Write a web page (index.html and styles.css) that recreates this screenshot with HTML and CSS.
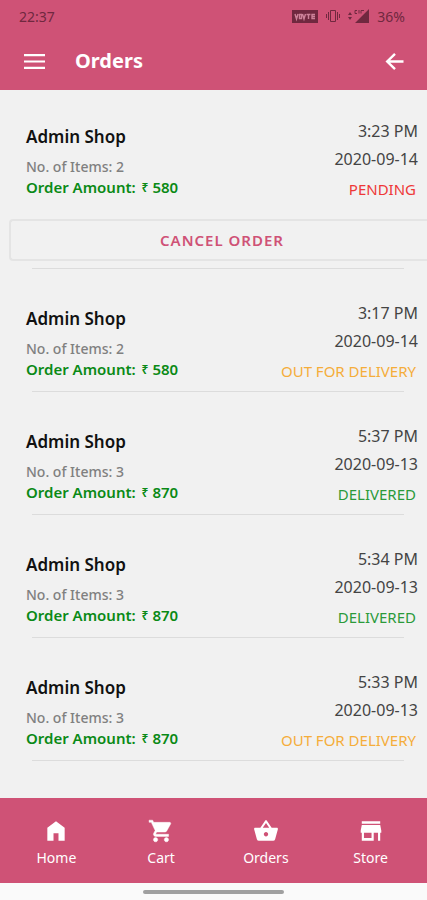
FILE: index.html
```html
<!DOCTYPE html>
<html lang="en">
<head>
<meta charset="utf-8">
<meta name="viewport" content="width=device-width, initial-scale=1">
<title>Orders</title>
<link rel="stylesheet" href="styles.css">
</head>
<body>
<header class="top">
  <div class="status-bar">
    <span>22:37</span>
    <span class="status-icons">
      <svg width="26" height="13" viewBox="0 0 26 13" aria-hidden="true"><path fill="currentColor" d="M0 0h26v13H0z"/><path fill="none" stroke="#cd8299" stroke-width="1.400" d="M3 4l1.500 5L6 4M7.500 4.500h2v4h-2zM10.500 4l1.500 5 1.500-5M14.500 4.500h4M16.500 4.500V9M23 4.500h-3v4h3M20 6.500h3"/></svg>
      <svg width="14" height="14" viewBox="0 0 14 14" aria-hidden="true"><path fill="none" stroke="currentColor" d="M4.500 1.500h5v11h-5zM2.500 3v8M11.500 3v8M.5 5v4M13.500 5v4"/></svg>
      <svg width="21" height="14" viewBox="0 0 21 14" aria-hidden="true"><path fill="currentColor" d="M0 6l2-3 2 3zM0 8l2 3 2-3zM21 0v14H7z"/><path fill="none" stroke="currentColor" stroke-width="1" d="M7 1.500h2M7 1.500v3h2M11 1v3.500M13 4.500v-3h3"/></svg>
      <span>36%</span>
    </span>
  </div>
  <div class="app-bar">
    <button class="icon-button" type="button" aria-label="Open menu"><svg width="24" height="24" viewBox="0 0 24 24"><path fill="currentColor" d="M2 5h21v2.200H2zM2 11.400h21v2.200H2zM2 17.800h21V20H2z"/></svg></button>
    <h1>Orders</h1>
    <button class="icon-button" type="button" aria-label="Back"><svg width="24" height="24" viewBox="0 0 24 24"><path fill="none" stroke="currentColor" stroke-width="2.400" d="M20.500 12.500H4.500M12 4.800L4.200 12.500l7.800 7.700"/></svg></button>
  </div>
</header>

<main class="orders">
  <article class="order">
    <div class="order-row">
      <div class="summary"><h2>Admin Shop</h2><p class="items">No. of Items: 2</p><p class="amount">Order Amount: <span class="rupee">₹</span> 580</p></div>
      <div class="details"><time>3:23 PM</time><time>2020-09-14</time><p class="state pending">PENDING</p></div>
    </div>
    <button class="cancel" type="button">CANCEL ORDER</button>
  </article>
  <article class="order">
    <div class="order-row">
      <div class="summary"><h2>Admin Shop</h2><p class="items">No. of Items: 2</p><p class="amount">Order Amount: <span class="rupee">₹</span> 580</p></div>
      <div class="details"><time>3:17 PM</time><time>2020-09-14</time><p class="state shipping">OUT FOR DELIVERY</p></div>
    </div>
  </article>
  <article class="order">
    <div class="order-row">
      <div class="summary"><h2>Admin Shop</h2><p class="items">No. of Items: 3</p><p class="amount">Order Amount: <span class="rupee">₹</span> 870</p></div>
      <div class="details"><time>5:37 PM</time><time>2020-09-13</time><p class="state delivered">DELIVERED</p></div>
    </div>
  </article>
  <article class="order">
    <div class="order-row">
      <div class="summary"><h2>Admin Shop</h2><p class="items">No. of Items: 3</p><p class="amount">Order Amount: <span class="rupee">₹</span> 870</p></div>
      <div class="details"><time>5:34 PM</time><time>2020-09-13</time><p class="state delivered">DELIVERED</p></div>
    </div>
  </article>
  <article class="order">
    <div class="order-row">
      <div class="summary"><h2>Admin Shop</h2><p class="items">No. of Items: 3</p><p class="amount">Order Amount: <span class="rupee">₹</span> 870</p></div>
      <div class="details"><time>5:33 PM</time><time>2020-09-13</time><p class="state shipping">OUT FOR DELIVERY</p></div>
    </div>
  </article>
</main>

<nav class="tabs">
  <a href="#home"><svg width="26" height="26" viewBox="0 0 24 24" aria-hidden="true"><path fill="currentColor" d="M12 3l8 6v12h-5.700v-7H9.700v7H4V9z"/></svg>Home</a>
  <a href="#cart"><svg width="26" height="26" viewBox="0 0 24 24" aria-hidden="true"><path fill="currentColor" stroke="currentColor" stroke-width=".4" d="M7 18c-1.100 0-1.990.9-1.990 2S5.900 22 7 22s2-.9 2-2-.9-2-2-2zM1 2v2h2l3.600 7.590-1.350 2.450c-.16.280-.25.610-.25.960 0 1.100.9 2 2 2h12v-2H7.420c-.14 0-.25-.11-.25-.25l.03-.12.9-1.630h7.450c.75 0 1.410-.41 1.750-1.030l3.580-6.490A1 1 0 0 0 20 4H5.210l-.94-2zm16 16c-1.100 0-1.990.9-1.990 2s.89 2 1.990 2 2-.9 2-2-.9-2-2-2z"/></svg>Cart</a>
  <a href="#orders" aria-current="page"><svg width="26" height="26" viewBox="0 0 24 24" aria-hidden="true"><path fill="currentColor" d="M17.210 9l-4.380-6.560a1 1 0 0 0-1.660.010L6.790 9H2c-.55 0-1 .45-1 1 0 .09.010.18.040.27l2.540 9.270A2 2 0 0 0 5.500 21h13a2 2 0 0 0 1.930-1.460l2.540-9.270L23 10c0-.55-.45-1-1-1zM9 9l3-4.400L15 9zm3 8c-1.100 0-2-.9-2-2s.9-2 2-2 2 .9 2 2-.9 2-2 2z"/></svg>Orders</a>
  <a href="#store"><svg width="26" height="26" viewBox="0 0 24 24" aria-hidden="true"><path fill="currentColor" d="M20.500 3h-17v2.400h17zM21.500 13.500v-2l-1-5h-17l-1 5v2h1V21h11v-7.500h4V21h2v-7.500zm-9 5h-7v-5h7z"/></svg>Store</a>
</nav>
<footer class="gesture"><span class="handle"></span></footer>
</body>
</html>
```
FILE: styles.css
```css
* { box-sizing: border-box; }

body {
  margin: 0;
  min-height: 100vh;
  display: flex;
  flex-direction: column;
  overflow-x: hidden;
  background: #f1f1f1;
  color: #111;
  font-family: "Noto Sans", "Open Sans", sans-serif;
}

h1, h2, p { margin: 0; }

button {
  font-family: inherit;
  cursor: pointer;
}

svg { display: block; }

.top {
  background: #cf5276;
  color: #fff;
}

.status-bar {
  display: flex;
  justify-content: space-between;
  align-items: center;
  height: 32px;
  padding: 0 22px 0 19px;
  color: #70283f;
  font-size: 14px;
}

.status-icons {
  display: flex;
  align-items: center;
  gap: 8px;
}

.app-bar {
  display: flex;
  align-items: center;
  height: 58px;
  padding: 0 20px 0 22px;
}

.app-bar h1 {
  flex: 1;
  margin-left: 29px;
  font-size: 20px;
  line-height: 28px;
  font-weight: 700;
}

.icon-button {
  padding: 0;
  border: 0;
  background: none;
  color: #fff;
}

.orders {
  flex: 1;
}

.order::after {
  content: "";
  display: block;
  height: 1px;
  margin: 0 23px 0 32px;
  background: #dcdcdc;
}

.order-row {
  display: flex;
  justify-content: space-between;
  padding: 30px 9px 6px 26px;
}

.order:first-child .order-row {
  padding-top: 27px;
}

.summary {
  padding-top: 8px;
}

.summary h2 {
  margin-bottom: 7px;
  font-size: 17px;
  line-height: 24px;
  font-weight: 600;
}

.items, .amount {
  line-height: 21px;
}

.items {
  color: #808080;
  font-size: 14px;
  font-weight: 500;
}

.amount {
  color: #0a8a16;
  font-size: 15px;
  font-weight: 600;
}

.rupee {
  margin-left: 2px;
  font-size: 12px;
  vertical-align: 1px;
}

.details {
  color: #444;
  font-size: 16px;
  line-height: 28px;
  text-align: right;
}

.details time { display: block; }

.state {
  padding: 2px 2px 0 0;
  font-size: 15px;
}

.pending { color: #ee3838; }
.shipping { color: #f5ad3a; }
.delivered { color: #2b9a3b; }

.cancel {
  display: block;
  width: calc(100% - 9px);
  height: 42px;
  margin: 10px 0 7px 9px;
  padding: 0 0 0 6px;
  border: 2px solid #e4e4e4;
  border-right: 0;
  border-radius: 4px 0 0 4px;
  background: none;
  color: #cf5276;
  font-size: 15px;
  font-weight: 600;
  letter-spacing: 1px;
}

.tabs {
  display: grid;
  grid-template-columns: repeat(4, 1fr);
  padding: 20px 4px 14px;
  background: #cf5276;
}

.tabs a {
  display: flex;
  flex-direction: column;
  align-items: center;
  gap: 3px;
  color: #fff;
  font-size: 14px;
  line-height: 22px;
  text-decoration: none;
}

.gesture {
  display: flex;
  justify-content: center;
  align-items: center;
  height: 17px;
  background: #fafafa;
}

.handle {
  width: 33%;
  height: 4px;
  border-radius: 2px;
  background: #a0a0a0;
}
```
